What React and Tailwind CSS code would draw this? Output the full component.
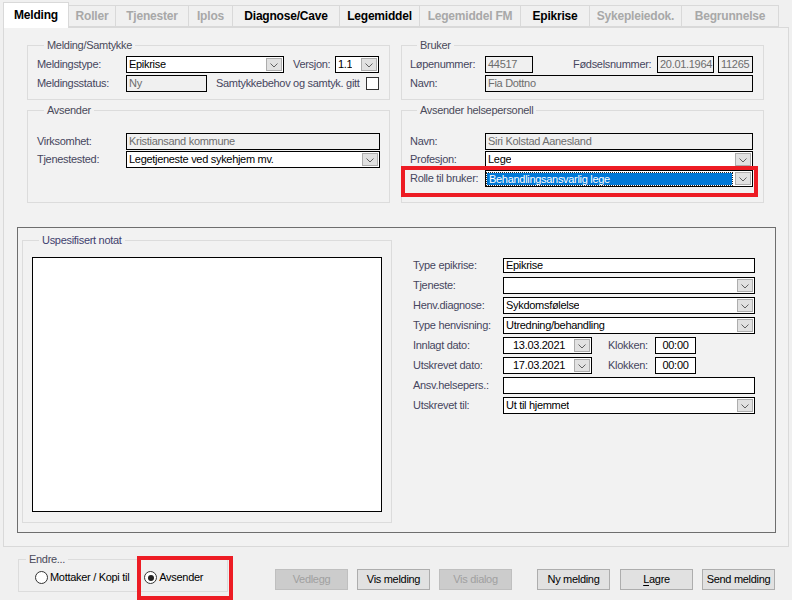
import React from 'react';

const tabs = [
  { name: 'Melding', w: 'w-[66px]', active: true },
  { name: 'Roller', w: 'w-[48px]', disabled: true },
  { name: 'Tjenester', w: 'w-[74px]', disabled: true },
  { name: 'Iplos', w: 'w-[45px]', disabled: true },
  { name: 'Diagnose/Cave', w: 'w-[108px]' },
  { name: 'Legemiddel', w: 'w-[81px]' },
  { name: 'Legemiddel FM', w: 'w-[102px]', disabled: true },
  { name: 'Epikrise', w: 'w-[70px]' },
  { name: 'Sykepleiedok.', w: 'w-[93px]', disabled: true },
  { name: 'Begrunnelse', w: 'w-[98px]', disabled: true },
];

const Chevron = () => (
  <svg width="8" height="5" viewBox="0 0 8 5" className="mb-[2px]">
    <path d="M0.5 0.5 L4 4 L7.5 0.5" fill="none" stroke="#606060" strokeWidth="1" />
  </svg>
);

const DropBtn = () => (
  <div className="w-[16px] m-px border border-[#adadad] bg-[#e1e1e1] flex items-end justify-center shrink-0">
    <Chevron />
  </div>
);

const Combo = ({ value, className = '', selected }) => (
  <div className={`flex h-[17px] border border-black bg-white shrink-0 ${className}`}>
    <div className="flex-1 min-w-0 flex items-center">
      {selected ? (
        <span className="ml-px mr-[2px] flex-1 h-[12px] leading-[12px] bg-[#0078d7] text-white pl-[2px] outline-1 outline-dotted outline-[#222]">
          {value}
        </span>
      ) : (
        <span className="pl-[2px] leading-[15px] truncate">{value}</span>
      )}
    </div>
    <DropBtn />
  </div>
);

const TextBox = ({ value, className = '', disabled, center }) => (
  <div
    className={`h-[17px] border border-black leading-[15px] px-[2px] shrink-0 whitespace-nowrap overflow-hidden ${
      disabled ? 'bg-[#f0f0f0] text-[#6d6d6d]' : 'bg-white text-black'
    } ${center ? 'text-center' : ''} ${className}`}
  >
    {value}
  </div>
);

const DateBox = ({ value }) => (
  <div className="flex h-[17px] w-[89px] border border-black bg-white shrink-0">
    <div className="flex-1 pl-[9px] leading-[15px]">{value}</div>
    <DropBtn />
  </div>
);

const Group = ({ title, className = '', legendColor = 'text-[#4a4a5a]', children }) => (
  <fieldset className={`border border-[#dcdcdc] ${className}`}>
    <legend className={`ml-[7px] px-[3px] leading-[14px] ${legendColor}`}>{title}</legend>
    {children}
  </fieldset>
);

const Label = ({ children, className = '' }) => (
  <span className={`shrink-0 whitespace-nowrap text-[#46465e] ${className}`}>{children}</span>
);

const Radio = ({ checked, label }) => (
  <div className="flex items-center">
    <span className="w-[13px] h-[13px] rounded-full border border-[#333] bg-white flex items-center justify-center">
      {checked && <span className="w-[6px] h-[6px] rounded-full bg-[#222]" />}
    </span>
    <span className="ml-[2px] text-black leading-[13px]">{label}</span>
  </div>
);

const Btn = ({ children, disabled, className = '' }) => (
  <div
    className={`w-[73px] h-[21px] flex items-center justify-center border ${
      disabled ? 'bg-[#cccccc] border-[#bfbfbf] text-[#a0a0a0]' : 'bg-[#e1e1e1] border-[#adadad] text-black'
    } ${className}`}
  >
    {children}
  </div>
);

const FormRow = ({ label, children }) => (
  <div className="flex items-center h-[17px]">
    <Label className="w-[90px]">{label}</Label>
    {children}
  </div>
);

export default function App() {
  return (
    <div className="relative w-[792px] h-[600px] overflow-hidden bg-[#f0f0f0] font-['Liberation_Sans',Arial,sans-serif] text-[11px] tracking-[-0.3px] text-black">
      {/* tabs */}
      <div className="flex items-end h-[27px] pl-[3px]">
        {tabs.map((t) => (
          <div
            key={t.name}
            className={`${t.w} flex items-center justify-center font-bold text-[12px] tracking-[-0.2px] border border-[#d9d9d9] -ml-px first:ml-0 ${
              t.active ? 'h-[26px] bg-white border-b-0 relative z-10 -mb-px pb-[2px]' : 'h-[22px] bg-[#f0f0f0]'
            } ${t.disabled ? 'text-[#a8a8a8]' : 'text-black'}`}
          >
            {t.name}
          </div>
        ))}
      </div>

      {/* tab page */}
      <div className="ml-[3px] w-[786px] h-[520px] border border-[#d9d9d9] bg-[#f2f2f2] pt-[10px] pl-[13px]">
        <div className="ml-[10px] flex gap-[11px]">
          {/* left column */}
          <div className="w-[363px] flex flex-col gap-[3px]">
            <Group title="Melding/Samtykke" className="h-[62px] pl-[9px]">
              <div className="pt-[4px] flex flex-col gap-[2px]">
                <div className="flex items-center">
                  <Label className="w-[89px]">Meldingstype:</Label>
                  <Combo value="Epikrise" className="w-[158px]" />
                  <Label className="ml-[9px] w-[42px]">Versjon:</Label>
                  <Combo value="1.1" className="w-[44px]" />
                </div>
                <div className="flex items-center">
                  <Label className="w-[89px]">Meldingsstatus:</Label>
                  <TextBox value="Ny" disabled className="w-[81px]" />
                  <Label className="ml-[9px] w-[150px]">Samtykkebehov og samtyk. gitt</Label>
                  <span className="w-[13px] h-[13px] border border-[#333] bg-white" />
                </div>
              </div>
            </Group>

            <Group title="Avsender" className="h-[100px] pl-[9px]">
              <div className="pt-[16px] flex flex-col gap-[1px]">
                <div className="flex items-center">
                  <Label className="w-[89px]">Virksomhet:</Label>
                  <TextBox value="Kristiansand kommune" disabled className="w-[254px]" />
                </div>
                <div className="flex items-center">
                  <Label className="w-[89px]">Tjenestested:</Label>
                  <Combo value="Legetjeneste ved sykehjem mv." className="w-[254px]" />
                </div>
              </div>
            </Group>
          </div>

          {/* right column */}
          <div className="w-[363px] flex flex-col gap-[3px]">
            <Group title="Bruker" className="h-[62px] pl-[8px]">
              <div className="pt-[4px] flex flex-col gap-[2px]">
                <div className="flex items-center">
                  <Label className="w-[75px]">Løpenummer:</Label>
                  <TextBox value="44517" disabled className="w-[48px]" />
                  <Label className="ml-[40px] w-[84px]">Fødselsnummer:</Label>
                  <TextBox value="20.01.1964" disabled className="w-[57px]" />
                  <TextBox value="11265" disabled className="ml-[4px] w-[35px]" />
                </div>
                <div className="flex items-center">
                  <Label className="w-[75px]">Navn:</Label>
                  <TextBox value="Fia Dottno" disabled className="w-[268px]" />
                </div>
              </div>
            </Group>

            <Group title="Avsender helsepersonell" className="h-[100px] pl-[8px]">
              <div className="pt-[16px] flex flex-col">
                <div className="flex items-center">
                  <Label className="w-[75px]">Navn:</Label>
                  <TextBox value="Siri Kolstad Aanesland" disabled className="w-[268px]" />
                </div>
                <div className="flex items-center mt-[1px]">
                  <Label className="w-[75px]">Profesjon:</Label>
                  <Combo value="Lege" className="w-[268px]" />
                </div>
                <div className="flex items-center mt-[2px]">
                  <Label className="w-[75px]">Rolle til bruker:</Label>
                  <Combo value="Behandlingsansvarlig lege" selected className="w-[268px]" />
                </div>
              </div>
            </Group>
          </div>
        </div>

        {/* epikrise box */}
        <div className="mt-[24px] w-[759px] h-[306px] border border-[#6e6e6e] flex pt-[5px] pl-[4px]">
          <Group title="Uspesifisert notat" className="w-[370px] h-[290px] pl-[9px]" legendColor="text-[#3f3f6e]">
            <div className="mt-[10px] w-[350px] h-[255px] bg-white border border-black" />
          </Group>

          <div className="ml-[21px] pt-[24px] flex flex-col gap-[3px]">
            <FormRow label="Type epikrise:">
              <TextBox value="Epikrise" className="w-[252px] !h-[15px] !leading-[13px]" />
            </FormRow>
            <FormRow label="Tjeneste:">
              <Combo value="" className="w-[252px]" />
            </FormRow>
            <FormRow label="Henv.diagnose:">
              <Combo value="Sykdomsfølelse" className="w-[252px]" />
            </FormRow>
            <FormRow label="Type henvisning:">
              <Combo value="Utredning/behandling" className="w-[252px]" />
            </FormRow>
            <FormRow label="Innlagt dato:">
              <DateBox value="13.03.2021" />
              <Label className="ml-[16px] w-[47px]">Klokken:</Label>
              <TextBox value="00:00" center className="w-[41px]" />
            </FormRow>
            <FormRow label="Utskrevet dato:">
              <DateBox value="17.03.2021" />
              <Label className="ml-[16px] w-[47px]">Klokken:</Label>
              <TextBox value="00:00" center className="w-[41px]" />
            </FormRow>
            <FormRow label="Ansv.helsepers.:">
              <TextBox value="" className="w-[252px]" />
            </FormRow>
            <FormRow label="Utskrevet til:">
              <Combo value="Ut til hjemmet" className="w-[252px]" />
            </FormRow>
          </div>
        </div>
      </div>

      {/* bottom bar */}
      <div className="flex items-start">
        <fieldset className="ml-[18px] mt-[5px] w-[210px] h-[40px] border border-[#dcdcdc]">
          <legend className="ml-[7px] px-[3px] leading-[14px] text-[#4a4a5a]">Endre...</legend>
          <div className="flex items-center pt-[5px] pl-[16px] gap-[15px]">
            <Radio label="Mottaker / Kopi til" />
            <Radio label="Avsender" checked />
          </div>
        </fieldset>
        <div className="flex mt-[22px] ml-[47px]">
          <Btn disabled>Vedlegg</Btn>
          <Btn className="ml-[9px]">Vis melding</Btn>
          <Btn disabled className="ml-[9px]">Vis dialog</Btn>
          <Btn className="ml-[25px]">Ny melding</Btn>
          <Btn className="ml-[10px]">
            <span className="underline underline-offset-2">L</span>agre
          </Btn>
          <Btn className="ml-[9px]">Send melding</Btn>
        </div>
      </div>

      {/* red annotation frames */}
      <div className="absolute left-[401px] top-[166px] w-[357px] h-[31px] border-[4px] border-[#ed1c24]" />
      <div className="absolute left-[137px] top-[556px] w-[96px] h-[44px] border-[4px] border-[#ed1c24]" />
    </div>
  );
}
